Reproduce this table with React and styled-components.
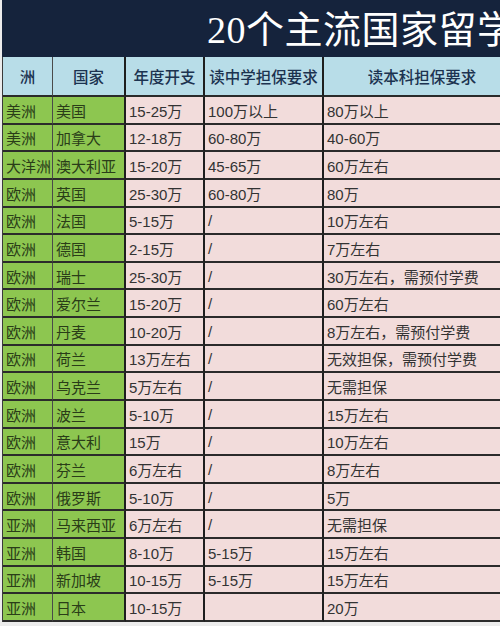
import React from "react";
import styled, { createGlobalStyle } from "styled-components";

const Global = createGlobalStyle`
  html, body { margin: 0; padding: 0; background: #ececec; }
  * { box-sizing: border-box; }
`;

const Page = styled.div`
  width: 500px;
  height: 626px;
  overflow: hidden;
  padding-left: 2px;
  background: #ececec;
`;

const TitleBar = styled.div`
  height: 57px;
  background: #15233c;
  display: flex;
  align-items: center;
  padding-left: 205px;
  overflow: hidden;
  white-space: nowrap;
`;

const Title = styled.h1`
  margin: 0;
  font-family: "Liberation Serif", "Noto Sans CJK SC", serif;
  font-weight: 400;
  font-size: 38px;
  line-height: 1;
  color: #ffffff;
  letter-spacing: 0.5px;
  padding-top: 3px;
`;

const Table = styled.div`
  display: grid;
  grid-template-columns: 50px 73px 79px 119px 1fr;
  grid-template-rows: 40px repeat(19, 27.63px);
  border-left: 1px solid #3a3a3a;
  width: 520px;
`;

const HeaderCell = styled.div`
  background: #b8dde8;
  color: #1c3350;
  font-family: "Noto Sans CJK SC", sans-serif;
  font-size: 15.5px;
  font-weight: 500;
  display: flex;
  align-items: center;
  justify-content: center;
  border-bottom: 2px solid #2a2a2a;
  border-right: ${(p) => (p.$thin ? "1px solid #4a4a4a" : "2px solid #1e1e1e")};
  white-space: nowrap;
`;

const Cell = styled.div`
  background: ${(p) => (p.$green ? "#8dc650" : "#f2dcdb")};
  color: ${(p) => (p.$green ? "#2a3d18" : "#333333")};
  font-family: "Liberation Sans", "Noto Sans CJK SC", sans-serif;
  font-size: 15px;
  font-weight: 400;
  display: flex;
  align-items: center;
  padding-left: 3px;
  padding-top: 1px;
  border-bottom: 2px solid #2b2b2b;
  border-right: ${(p) => (p.$thin ? "1px solid #4a4a4a" : "2px solid #1e1e1e")};
  white-space: nowrap;
  overflow: hidden;
`;

const headers = ["洲", "国家", "年度开支", "读中学担保要求", "读本科担保要求"];

const rows = [
  ["美洲", "美国", "15-25万", "100万以上", "80万以上"],
  ["美洲", "加拿大", "12-18万", "60-80万", "40-60万"],
  ["大洋洲", "澳大利亚", "15-20万", "45-65万", "60万左右"],
  ["欧洲", "英国", "25-30万", "60-80万", "80万"],
  ["欧洲", "法国", "5-15万", "/", "10万左右"],
  ["欧洲", "德国", "2-15万", "/", "7万左右"],
  ["欧洲", "瑞士", "25-30万", "/", "30万左右，需预付学费"],
  ["欧洲", "爱尔兰", "15-20万", "/", "60万左右"],
  ["欧洲", "丹麦", "10-20万", "/", "8万左右，需预付学费"],
  ["欧洲", "荷兰", "13万左右", "/", "无效担保，需预付学费"],
  ["欧洲", "乌克兰", "5万左右", "/", "无需担保"],
  ["欧洲", "波兰", "5-10万", "/", "15万左右"],
  ["欧洲", "意大利", "15万", "/", "10万左右"],
  ["欧洲", "芬兰", "6万左右", "/", "8万左右"],
  ["欧洲", "俄罗斯", "5-10万", "/", "5万"],
  ["亚洲", "马来西亚", "6万左右", "/", "无需担保"],
  ["亚洲", "韩国", "8-10万", "5-15万", "15万左右"],
  ["亚洲", "新加坡", "10-15万", "5-15万", "15万左右"],
  ["亚洲", "日本", "10-15万", "", "20万"],
];

export default function App() {
  return (
    <Page>
      <Global />
      <TitleBar>
        <Title>20个主流国家留学</Title>
      </TitleBar>
      <Table>
        {headers.map((h, i) => (
          <HeaderCell key={h} $thin={i === 0}>
            {h}
          </HeaderCell>
        ))}
        {rows.map((r, ri) =>
          r.map((c, ci) => (
            <Cell key={`${ri}-${ci}`} $green={ci < 2} $thin={ci === 0}>
              {c}
            </Cell>
          ))
        )}
      </Table>
    </Page>
  );
}
